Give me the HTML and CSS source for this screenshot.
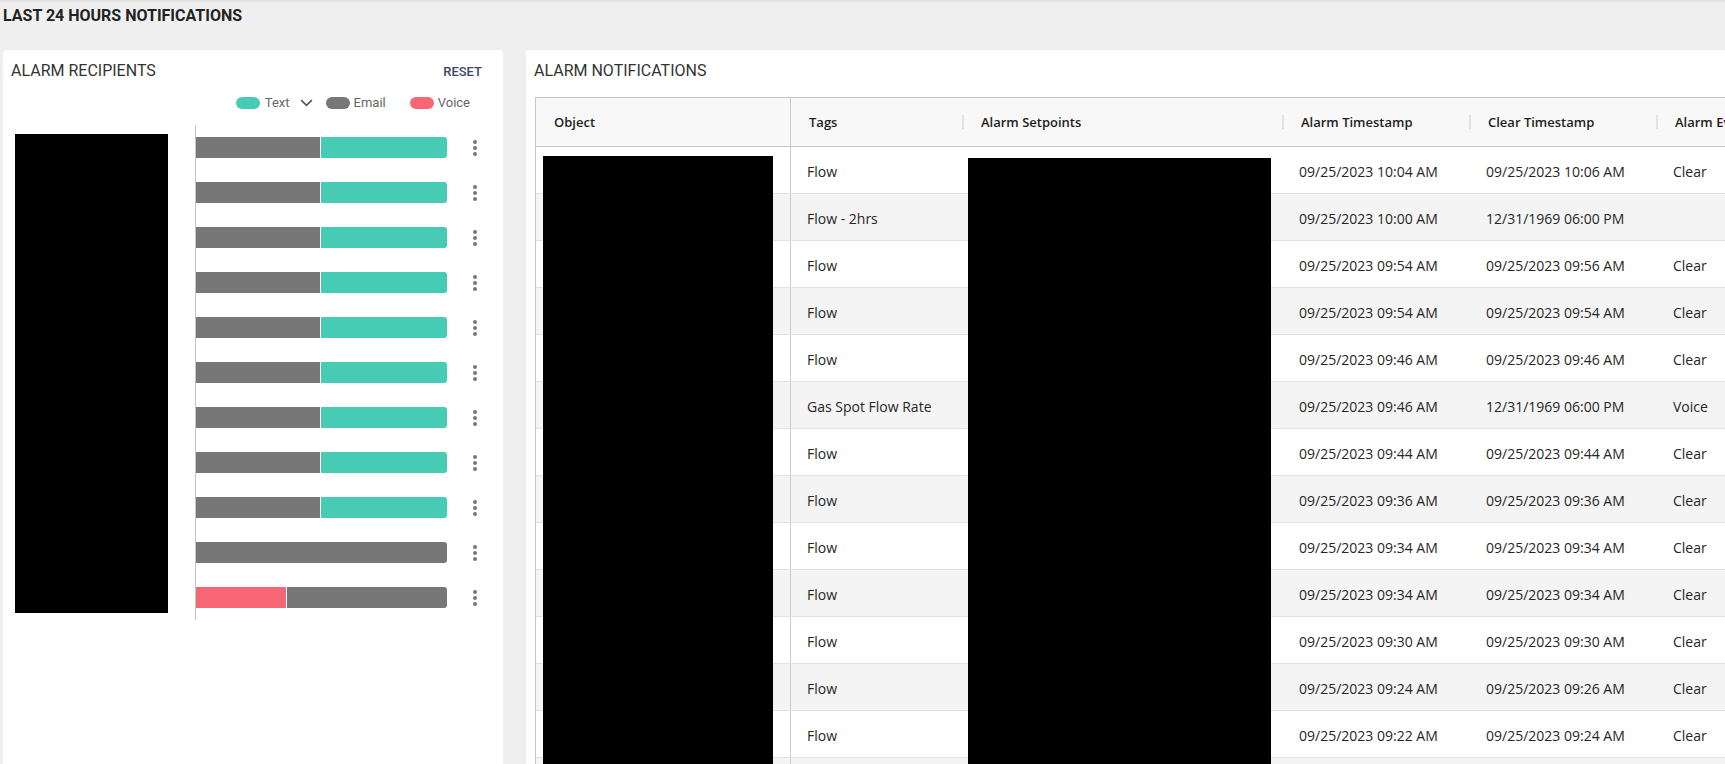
FILE: index.html
```html
<!doctype html>
<html lang="en">
<head>
<meta charset="UTF-8" />
<meta name="viewport" content="width=device-width,initial-scale=1" />
<title>Last 24 Hours Notifications</title>
<link rel="stylesheet" href="styles.css">
</head>
<body>

<div class="top">LAST 24 HOURS NOTIFICATIONS</div>

<div class="panels">
	<!-- recipients chart -->
	<div class="card recipients">
		<div class="card-head">
			<span class="card-title">ALARM RECIPIENTS</span>
			<a class="reset" href="#">RESET</a>
		</div>
		<div class="legend">
			<span class="legend-item"><i class="pill text"></i>Text</span>
			<svg class="chevron" width="13" height="8" viewBox="0 0 13 8"><path d="M1.2 1.2 L6.5 6.3 L11.8 1.2" fill="none" stroke="#555" stroke-width="1.7"/></svg>
			<span class="legend-item email"><i class="pill email"></i>Email</span>
			<span class="legend-item voice"><i class="pill voice"></i>Voice</span>
		</div>
		<div class="chart">
			<div class="names"></div>
			<ul class="bars">
				<li><span class="track"><b class="seg email" style="width:49.4%"></b><b class="seg text"></b></span><span class="more"><i></i><i></i><i></i></span></li>
				<li><span class="track"><b class="seg email" style="width:49.4%"></b><b class="seg text"></b></span><span class="more"><i></i><i></i><i></i></span></li>
				<li><span class="track"><b class="seg email" style="width:49.4%"></b><b class="seg text"></b></span><span class="more"><i></i><i></i><i></i></span></li>
				<li><span class="track"><b class="seg email" style="width:49.4%"></b><b class="seg text"></b></span><span class="more"><i></i><i></i><i></i></span></li>
				<li><span class="track"><b class="seg email" style="width:49.4%"></b><b class="seg text"></b></span><span class="more"><i></i><i></i><i></i></span></li>
				<li><span class="track"><b class="seg email" style="width:49.4%"></b><b class="seg text"></b></span><span class="more"><i></i><i></i><i></i></span></li>
				<li><span class="track"><b class="seg email" style="width:49.4%"></b><b class="seg text"></b></span><span class="more"><i></i><i></i><i></i></span></li>
				<li><span class="track"><b class="seg email" style="width:49.4%"></b><b class="seg text"></b></span><span class="more"><i></i><i></i><i></i></span></li>
				<li><span class="track"><b class="seg email" style="width:49.4%"></b><b class="seg text"></b></span><span class="more"><i></i><i></i><i></i></span></li>
				<li><span class="track"><b class="seg email" style="width:100%"></b></span><span class="more"><i></i><i></i><i></i></span></li>
				<li><span class="track"><b class="seg voice" style="width:35.9%"></b><b class="seg email"></b></span><span class="more"><i></i><i></i><i></i></span></li>
			</ul>
		</div>
	</div>

	<!-- notifications grid -->
	<div class="card notifications">
		<div class="card-head">
			<span class="card-title">ALARM NOTIFICATIONS</span>
		</div>
		<div class="grid">
			<div class="row grid-head">
				<span class="cell">Object</span>
				<span class="cell">Tags</span>
				<span class="cell sep">Alarm Setpoints</span>
				<span class="cell sep">Alarm Timestamp</span>
				<span class="cell sep">Clear Timestamp</span>
				<span class="cell sep">Alarm Event</span>
			</div>
			<div class="row"><span class="cell"></span><span class="cell">Flow</span><span class="cell"></span><span class="cell">09/25/2023 10:04 AM</span><span class="cell">09/25/2023 10:06 AM</span><span class="cell">Clear</span></div>
			<div class="row"><span class="cell"></span><span class="cell">Flow - 2hrs</span><span class="cell"></span><span class="cell">09/25/2023 10:00 AM</span><span class="cell">12/31/1969 06:00 PM</span><span class="cell"></span></div>
			<div class="row"><span class="cell"></span><span class="cell">Flow</span><span class="cell"></span><span class="cell">09/25/2023 09:54 AM</span><span class="cell">09/25/2023 09:56 AM</span><span class="cell">Clear</span></div>
			<div class="row"><span class="cell"></span><span class="cell">Flow</span><span class="cell"></span><span class="cell">09/25/2023 09:54 AM</span><span class="cell">09/25/2023 09:54 AM</span><span class="cell">Clear</span></div>
			<div class="row"><span class="cell"></span><span class="cell">Flow</span><span class="cell"></span><span class="cell">09/25/2023 09:46 AM</span><span class="cell">09/25/2023 09:46 AM</span><span class="cell">Clear</span></div>
			<div class="row"><span class="cell"></span><span class="cell">Gas Spot Flow Rate</span><span class="cell"></span><span class="cell">09/25/2023 09:46 AM</span><span class="cell">12/31/1969 06:00 PM</span><span class="cell">Voice</span></div>
			<div class="row"><span class="cell"></span><span class="cell">Flow</span><span class="cell"></span><span class="cell">09/25/2023 09:44 AM</span><span class="cell">09/25/2023 09:44 AM</span><span class="cell">Clear</span></div>
			<div class="row"><span class="cell"></span><span class="cell">Flow</span><span class="cell"></span><span class="cell">09/25/2023 09:36 AM</span><span class="cell">09/25/2023 09:36 AM</span><span class="cell">Clear</span></div>
			<div class="row"><span class="cell"></span><span class="cell">Flow</span><span class="cell"></span><span class="cell">09/25/2023 09:34 AM</span><span class="cell">09/25/2023 09:34 AM</span><span class="cell">Clear</span></div>
			<div class="row"><span class="cell"></span><span class="cell">Flow</span><span class="cell"></span><span class="cell">09/25/2023 09:34 AM</span><span class="cell">09/25/2023 09:34 AM</span><span class="cell">Clear</span></div>
			<div class="row"><span class="cell"></span><span class="cell">Flow</span><span class="cell"></span><span class="cell">09/25/2023 09:30 AM</span><span class="cell">09/25/2023 09:30 AM</span><span class="cell">Clear</span></div>
			<div class="row"><span class="cell"></span><span class="cell">Flow</span><span class="cell"></span><span class="cell">09/25/2023 09:24 AM</span><span class="cell">09/25/2023 09:26 AM</span><span class="cell">Clear</span></div>
			<div class="row"><span class="cell"></span><span class="cell">Flow</span><span class="cell"></span><span class="cell">09/25/2023 09:22 AM</span><span class="cell">09/25/2023 09:24 AM</span><span class="cell">Clear</span></div>
			<div class="row"><span class="cell"></span><span class="cell">Flow</span><span class="cell"></span><span class="cell">09/25/2023 09:20 AM</span><span class="cell">09/25/2023 09:20 AM</span><span class="cell">Clear</span></div>
			<span class="mask mask-object"></span>
			<span class="mask mask-setpoint"></span>
		</div>
	</div>
</div>

</body>
</html>
```

FILE: styles.css
```css
html,body,ul{margin:0;padding:0;}
li{list-style:none;}
a{text-decoration:none;}
html,body{overflow:hidden;}

body{
	background: #efefef;
	font-family: Roboto, "Liberation Sans", sans-serif;
	color: #333;
}

.top{
	height: 50px;
	box-sizing: border-box;
	padding: 6px 3px 0;
	font-size: 16px;
	line-height: 19px;
	font-weight: 700;
	color: #222;
	box-shadow: inset 0 3px 3px -2px rgba(0,0,0,.09);
}

.panels{
	display: flex;
	gap: 23px;
	padding-left: 3px;
}

.card{
	background: #fff;
	border-radius: 4px;
	height: 730px;
}

.recipients{
	width: 500px;
	flex: none;
}

.notifications{
	flex: 1;
	overflow: hidden;
	border-radius: 4px 0 0 0;
}

.card-head{
	display: flex;
	justify-content: space-between;
	align-items: baseline;
	padding: 11px 21px 0 8px;
}

.card-title{
	font-size: 16px;
	line-height: 19px;
	font-weight: 400;
	color: #333;
}

.reset{
	font-size: 13px;
	font-weight: 500;
	color: #3a4868;
}

/* legend */
.legend{
	display: flex;
	justify-content: flex-end;
	align-items: center;
	margin-top: 15px;
	padding-right: 33px;
	font-size: 13px;
	line-height: 16px;
	color: #666;
}

.legend-item{
	display: flex;
	align-items: center;
	gap: 5px;
}
.legend-item.email{ margin-left: 13px; gap: 4px; }
.legend-item.voice{ margin-left: 24px; gap: 4px; }

.chevron{ margin-left: 10px; }

.pill{
	display: block;
	width: 24px;
	height: 12px;
	border-radius: 6px;
}
.pill.text, .seg.text{ background: #48cbb4; }
.pill.email, .seg.email{ background: #777; }
.pill.voice, .seg.voice{ background: #f76674; }

/* bar chart */
.chart{
	display: flex;
	margin-top: 14px;
	padding-left: 12px;
}

.names{
	width: 153px;
	height: 479px;
	margin-top: 9px;
	background: #000;
}

.bars{
	margin-left: 27px;
	padding: 12px 0;
	border-left: 1px solid #c4c4c4;
}

.bars li{
	display: flex;
	align-items: center;
	height: 21px;
}
.bars li + li{ margin-top: 24px; }

.track{
	display: flex;
	width: 251px;
	height: 21px;
	border-radius: 0 3px 3px 0;
	overflow: hidden;
}

.seg{ display: block; height: 100%; }
.seg + .seg{
	flex: 1;
	border-left: 1px solid #fff;
}

.more{
	display: flex;
	flex-direction: column;
	gap: 2px;
	margin-left: 26px;
}
.more i{
	display: block;
	width: 4px;
	height: 4px;
	border-radius: 50%;
	background: #777;
}

/* notifications grid */
.grid{
	position: relative;
	width: 1342px;
	margin: 17px 0 0 9px;
	border-top: 1px solid #c3c7cf;
	border-left: 1px solid #c3c7cf;
	font-family: "Open Sans", "Noto Sans", sans-serif;
	font-size: 14px;
	color: #262626;
}

.row{
	display: grid;
	grid-template-columns: 255px 172px 320px 187px 187px 221px;
	height: 47px;
	box-sizing: border-box;
	border-bottom: 1px solid #dde2eb;
}
.row:nth-child(odd){ background: #f4f4f4; }

.cell{
	display: flex;
	align-items: center;
	padding: 2px 0 0 16px;
	white-space: nowrap;
	overflow: hidden;
}
.cell:first-child{
	box-sizing: border-box;
	border-right: 1px solid #c8ccd4;
}

.grid-head{
	height: 49px;
	background: #f8f8f8 !important;
	border-bottom: 1px solid #c3c7cf;
	font-size: 13px;
	font-weight: 600;
	color: #1e1e1e;
}
.grid-head .cell{
	position: relative;
	padding: 0 0 0 18px;
	overflow: visible;
}

/* column resize handles */
.grid-head .sep::before{
	content: '';
	position: absolute;
	left: -1px;
	top: 17px;
	width: 2px;
	height: 14px;
	background: #dde2eb;
}

/* hidden values */
.mask{
	position: absolute;
	background: #000;
	bottom: -60px;
}
.mask-object{ left: 7px; top: 58px; width: 230px; }
.mask-setpoint{ left: 432px; top: 60px; width: 303px; }
```
